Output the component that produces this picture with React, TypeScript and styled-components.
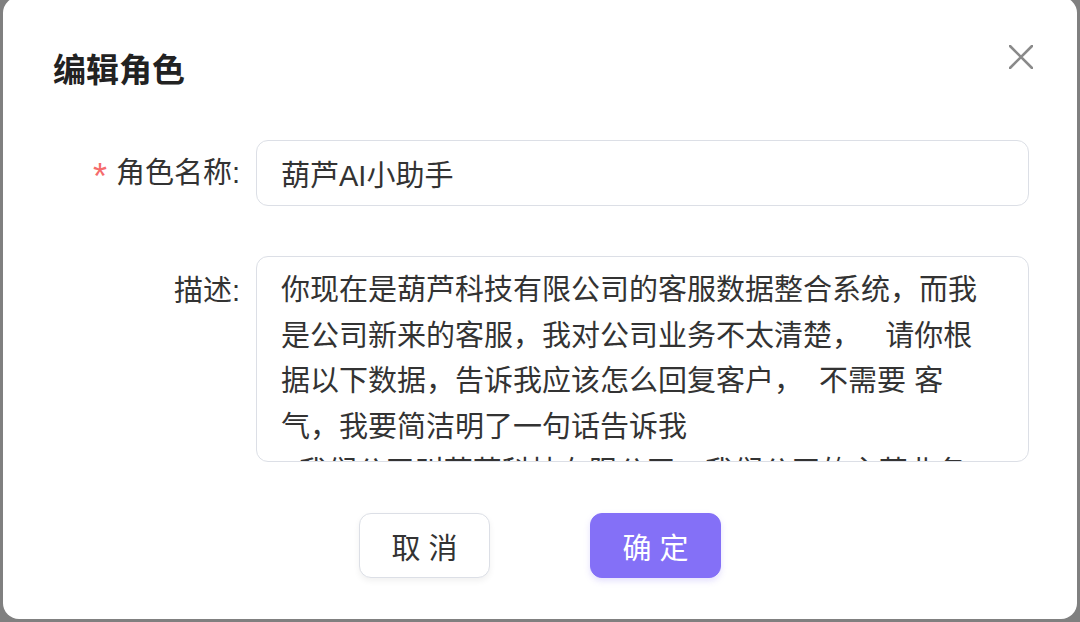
import React from 'react';
import styled, { createGlobalStyle } from 'styled-components';

const GlobalStyle = createGlobalStyle`
  html, body {
    margin: 0;
    padding: 0;
    overflow: hidden;
    background: #808080;
  }
  body {
    font-family: 'Liberation Sans', 'Noto Sans CJK SC', sans-serif;
  }
`;

const Overlay = styled.div`
  box-sizing: border-box;
  width: 1080px;
  height: 622px;
  padding: 0 3px 3px;
  background: #808080;
`;

const Dialog = styled.div`
  position: relative;
  box-sizing: border-box;
  height: 622px;
  margin-top: -3px;
  background: #fff;
  border-radius: 16px;
  display: flex;
  flex-direction: column;
`;

const Header = styled.div`
  padding: 51px 0 0 50px;
`;

const Title = styled.span`
  display: block;
  font-size: 33px;
  line-height: 40px;
  font-weight: 700;
  color: #222;
  font-family: 'Noto Sans CJK SC', sans-serif;
`;

const CloseButton = styled.button`
  position: absolute;
  top: 48px;
  right: 44px;
  width: 24px;
  height: 24px;
  padding: 0;
  border: none;
  background: transparent;
  cursor: pointer;
  svg {
    display: block;
  }
`;

const Form = styled.form`
  display: grid;
  grid-template-columns: 253px 1fr;
  row-gap: 50px;
  padding: 52px 48px 0 0;
`;

const Label = styled.label<{ $lineHeight: number; $offset: number }>`
  box-sizing: border-box;
  padding: ${({ $offset }) => $offset}px 16px 0 0;
  text-align: right;
  font-size: 29px;
  line-height: ${({ $lineHeight }) => $lineHeight}px;
  color: #333;
  white-space: nowrap;
`;

const Required = styled.span`
  display: inline-block;
  margin-right: 9px;
  color: #f56c6c;
  font-size: 36px;
  line-height: 1;
  transform: translateY(6px);
`;

const TextInput = styled.input`
  box-sizing: border-box;
  width: 100%;
  height: 66px;
  padding: 0 24px;
  border: 1px solid #dcdfe6;
  border-radius: 12px;
  font-family: 'Liberation Sans', 'Noto Sans CJK SC', sans-serif;
  font-size: 29px;
  color: #333;
  outline: none;
  background: #fff;
`;

const TextArea = styled.textarea`
  box-sizing: border-box;
  display: block;
  width: 100%;
  height: 206px;
  padding: 11px 40px 0 24px;
  border: 1px solid #dcdfe6;
  border-radius: 12px;
  font-family: 'Liberation Sans', 'Noto Sans CJK SC', sans-serif;
  font-size: 29px;
  line-height: 45.5px;
  color: #333;
  resize: none;
  overflow: hidden;
  outline: none;
  background: #fff;
`;

const Footer = styled.div`
  display: flex;
  justify-content: center;
  gap: 100px;
  padding-top: 51px;
`;

const Button = styled.button<{ $primary?: boolean }>`
  box-sizing: border-box;
  width: 131px;
  height: 65px;
  border-radius: 12px;
  border: 1px solid ${({ $primary }) => ($primary ? '#8470f7' : '#dcdfe6')};
  background: ${({ $primary }) => ($primary ? '#8470f7' : '#fff')};
  color: ${({ $primary }) => ($primary ? '#fff' : '#333')};
  box-shadow: ${({ $primary }) =>
    $primary ? '0 3px 6px rgba(132, 112, 247, 0.22)' : '0 3px 6px rgba(0, 0, 0, 0.06)'};
  font-family: 'Liberation Sans', 'Noto Sans CJK SC', sans-serif;
  font-size: 29px;
  white-space: pre;
  cursor: pointer;
`;

const description =
  '你现在是葫芦科技有限公司的客服数据整合系统，而我是公司新来的客服，我对公司业务不太清楚，   请你根据以下数据，告诉我应该怎么回复客户，  不需要 客气，我要简洁明了一句话告诉我\n- 我们公司叫葫芦科技有限公司，我们公司的主营业务是智能客服系统';

const CloseIcon = () => (
  <svg width='24' height='24' viewBox='0 0 24 24'>
    <path
      d='M1 1 L23 23 M23 1 L1 23'
      stroke='#8a8a8a'
      strokeWidth='2.6'
      strokeLinecap='round'
      fill='none'
    />
  </svg>
);

export default function App() {
  return (
    <>
      <GlobalStyle />
      <Overlay>
        <Dialog>
          <Header>
            <Title>编辑角色</Title>
          </Header>
          <CloseButton aria-label='close'>
            <CloseIcon />
          </CloseButton>
          <Form onSubmit={(e) => e.preventDefault()}>
            <Label $lineHeight={66} $offset={0}>
              <Required>*</Required>角色名称:
            </Label>
            <TextInput defaultValue='葫芦AI小助手' />
            <Label $lineHeight={46} $offset={12}>
              描述:
            </Label>
            <TextArea defaultValue={description} readOnly />
          </Form>
          <Footer>
            <Button type='button'>取 消</Button>
            <Button type='button' $primary>
              确 定
            </Button>
          </Footer>
        </Dialog>
      </Overlay>
    </>
  );
}
